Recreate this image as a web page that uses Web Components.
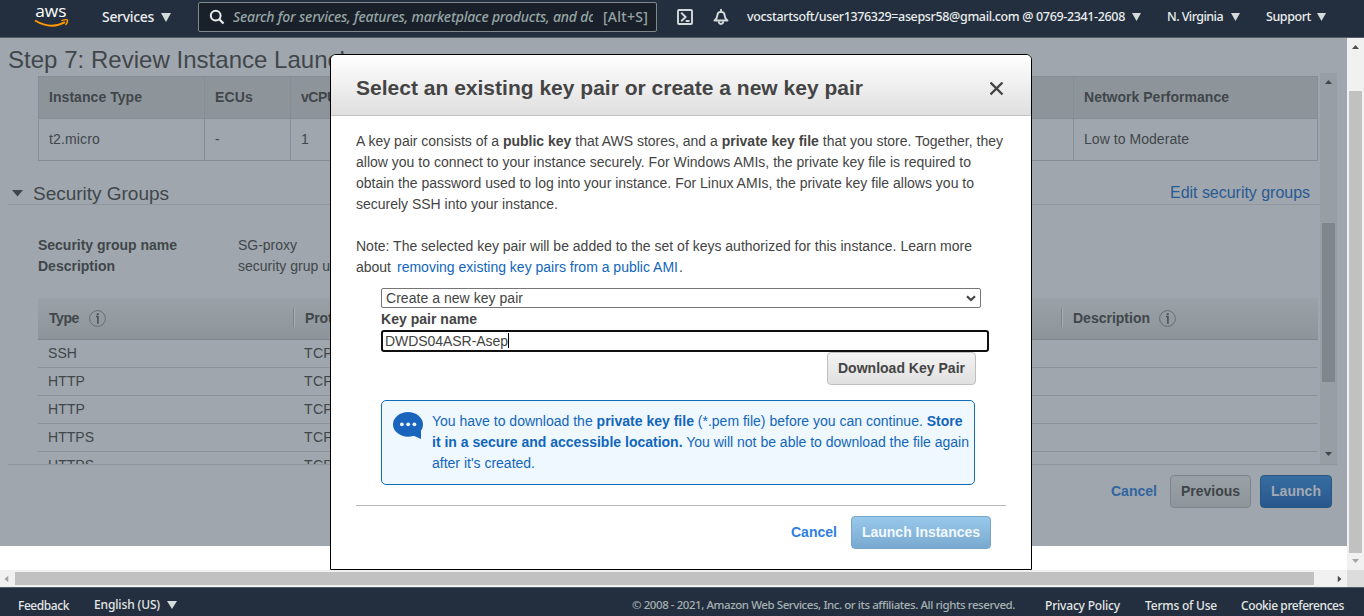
<!DOCTYPE html>
<html lang="en">
<head>
<meta charset="utf-8">
<title>EC2 Management Console</title>
<style>
html,body{margin:0;height:616px;overflow:hidden;background:#fff}
body{font-family:"Liberation Sans",Arial,sans-serif;font-size:14px;color:#444}
</style>
</head>
<body>
<console-app></console-app>
<script>
const tracked = new Set();
function define(name, html, setup) {
  const t = document.createElement('template');
  t.innerHTML = html;
  customElements.define(name, class extends HTMLElement {
    constructor() {
      super();
      this.attachShadow({mode: 'open'}).appendChild(t.content.cloneNode(true));
    }
    connectedCallback() { if (setup) setup(this, this.shadowRoot); }
  });
}

/* Single line of text, tracked to fill the width given in "w". */
define('line-text', `<style>
:host{display:block;white-space:nowrap;flex:none}
span{display:inline-block;white-space:pre}
</style><span><slot></slot></span>`, el => { tracked.add(el); el.style.width = el.getAttribute('w') + 'px'; });

define('caret-down', `<style>
:host{display:block;flex:none;width:10px;height:9px}svg{display:block;width:100%;height:100%}
</style><svg viewBox="0 0 10 9" preserveAspectRatio="none"><path d="M0 0H10L5 9Z" fill="#d5dbdb"/></svg>`);

define('info-mark', `<style>:host{display:block;flex:none;width:17px;height:17px}svg{display:block}</style>
<svg width="17" height="17" viewBox="0 0 17 17"><circle cx="8.5" cy="8.5" r="7.9" fill="none" stroke="#686e73" stroke-width="1"/><path d="M7 6.5h1.9v7.2" fill="none" stroke="#4c5156" stroke-width="1.6"/><rect x="7.7" y="3.3" width="2" height="1.7" fill="#4c5156"/></svg>`);

define('ui-button', `<style>
:host{display:flex;box-sizing:border-box;height:33px;border:1px solid #bfbfbf;border-radius:4px;align-items:center;justify-content:center;font-weight:bold;color:#444;background:linear-gradient(#f3f3f3,#e0e0e0);line-height:21px;flex:none}
:host([kind=dim]){border-color:#7d848a;background:linear-gradient(#9aa1a6,#8f969b);color:#3f4449}
:host([kind=launch]){border-color:#265682;background:linear-gradient(#376da2,#28578b);color:#a3aab3}
:host([kind=primary]){border-color:#76a6cc;background:linear-gradient(#98c9eb,#79a9cf);color:#f2f8fd}
</style><slot></slot>`);

define('scroll-track', `<style>
:host{display:flex;flex-direction:column;align-items:center;box-sizing:border-box;width:17px;background:var(--track,#f1f1f1);flex:none}
:host([horizontal]){flex-direction:row;width:auto;height:17px}
.end{width:17px;height:17px;flex:none;display:flex;align-items:center;justify-content:center}
.pre{flex:none}
.thumb{background:var(--thumb,#c1c1c1);width:13px;flex:none}
.gap{flex:1}
:host([horizontal]) .thumb{height:13px}
:host([horizontal]) .end{width:var(--end,17px)}
:host([horizontal]) .a{padding-right:3px;box-sizing:border-box}
.b{box-sizing:border-box;padding-bottom:var(--lift,2px)}
:host([horizontal]) .b{padding:0}
svg{display:block}
:host([horizontal]) svg{transform:rotate(-90deg)}
</style>
<div class="end a"><svg width="7" height="4"><path d="M0 4L3.5 0L7 4Z"/></svg></div><div class="pre"></div><div class="thumb"></div><div class="gap"></div>
<div class="end b"><svg width="7" height="4"><path d="M0 0L3.5 4L7 0Z"/></svg></div>`, (el, r) => {
  const h = el.hasAttribute('horizontal'), p = h ? 'width' : 'height';
  r.querySelector('.pre').style[p] = el.getAttribute('before') + 'px';
  r.querySelector('.thumb').style[p] = el.getAttribute('size') + 'px';
  r.querySelector('.a path').setAttribute('fill', el.getAttribute('start') || '#505050');
  r.querySelector('.b path').setAttribute('fill', el.getAttribute('finish') || '#505050');
});

define('console-header', `<style>
:host{display:flex;box-sizing:border-box;height:38px;background:#232f3e;border-bottom:1px solid #555e68;font:500 12.5px/20px "Noto Sans","Open Sans",sans-serif;color:#eaeded;align-items:flex-start}
.logo{width:34px;height:22px;margin:6px 0 0 34px;flex:none}
.logo svg{display:block;overflow:visible}
.t{margin-top:7px}
.search{display:flex;box-sizing:border-box;width:459px;height:30px;margin:2px 0 0 27px;border:1px solid #7f8a8d;border-radius:2px;background:#1a2029;color:#95a5a6;font-size:14px;line-height:28px;flex:none;align-items:center}
.search svg{margin-left:10px;flex:none}
.ph{width:360px;margin-left:8px;overflow:hidden;font-style:italic}
caret-down{margin-top:13px}
.ico{margin-top:9px;flex:none}
</style>
<div class="logo"><svg width="35" height="22" viewBox="0 0 35 22"><text x="1.2" y="11.2" textLength="31.3" lengthAdjust="spacingAndGlyphs" font-family="Open Sans" font-weight="500" font-size="17" fill="#fff">aws</text>
<path d="M1 14.5Q17 24 31 16.2" fill="none" stroke="#f90" stroke-width="1.9"/><path d="M27.4 14.6Q33 12.9 33.6 14.3Q33.8 16.2 31.6 19" fill="none" stroke="#f90" stroke-width="1.4"/></svg></div>
<line-text class="t" w="52" style="font-size:14px;margin-left:34px">Services</line-text><caret-down style="margin-left:7px"></caret-down>
<div class="search"><svg width="16" height="16" viewBox="0 0 16 16"><circle cx="6.7" cy="6.6" r="4.9" fill="none" stroke="#eaeded" stroke-width="2"/><path d="M10.3 10.3L14.5 14.5" stroke="#eaeded" stroke-width="2.2"/></svg>
<div class="ph"><line-text w="363">Search for services, features, marketplace products, and do</line-text></div>
<line-text w="45" style="margin-left:10px">[Alt+S]</line-text></div>
<svg class="ico" style="margin-left:20px" width="16" height="16" viewBox="0 0 16 16"><rect x="1" y="1" width="14" height="14" rx="1" fill="none" stroke="#d5dbdb" stroke-width="1.9"/><path d="M4.2 3.8L8.6 8L4.2 12.2M8.7 12H12.5" fill="none" stroke="#d5dbdb" stroke-width="1.9"/></svg>
<svg class="ico" style="margin-left:20px" width="16" height="16" viewBox="0 0 16 16"><path d="M1.5 11.5Q4.2 9.4 4.3 6.6Q4.6 2.9 8 2.7Q11.4 2.9 11.7 6.6Q11.8 9.4 14.5 11.5Z" fill="none" stroke="#d5dbdb" stroke-width="1.9" stroke-linejoin="round"/><path d="M8 0V2.4M5.7 12.3Q5.8 15 8 15Q10.2 15 10.3 12.3" fill="none" stroke="#d5dbdb" stroke-width="1.8"/></svg>
<line-text class="t" w="378" style="margin-left:18px">vocstartsoft/user1376329=asepsr58@gmail.com @ 0769-2341-2608</line-text><caret-down style="margin-left:7px;width:9px;height:8px"></caret-down>
<line-text class="t" w="56" style="margin-left:26px">N. Virginia</line-text><caret-down style="margin-left:8px;width:9px;height:8px"></caret-down>
<line-text class="t" w="45" style="margin-left:26px">Support</line-text><caret-down style="margin-left:6px;width:9px;height:8px"></caret-down>`);

define('console-footer', `<style>
:host{display:flex;box-sizing:border-box;height:29px;background:#232f3e;border-top:1px solid #535d64;font:500 12px/20px "Noto Sans","Open Sans",sans-serif;color:#e3e7e7;padding:8px 0 0 18px}
line-text{height:20px}
</style>
<line-text w="51">Feedback</line-text><line-text w="66" style="margin:-1px 0 0 25px">English (US)</line-text><caret-down style="margin:5px 0 0 7px;width:10px;height:8px"></caret-down>
<line-text w="383" style="margin:-1px 0 0 455px;color:#a6b0b3;font-size:11.5px">© 2008 - 2021, Amazon Web Services, Inc. or its affiliates. All rights reserved.</line-text>
<line-text w="75" style="margin-left:30px">Privacy Policy</line-text><line-text w="72" style="margin-left:25px">Terms of Use</line-text><line-text w="103" style="margin-left:24px">Cookie preferences</line-text>`);

define('instance-table', `<style>
:host{display:grid;grid-template-columns:166px 86px 783px 244px;grid-template-rows:42px 42px;box-sizing:border-box;width:1280px;height:85px;border:solid #868d94;border-width:1px 0 0 1px;line-height:41px}
div{box-sizing:border-box;border:solid #868d94;border-width:0 1px 1px 0;padding-left:10px}
.h{background:#8e959a;font-weight:bold}
</style>
<div class="h"><line-text w="93">Instance Type</line-text></div><div class="h"><line-text w="38">ECUs</line-text></div><div class="h"><line-text w="43">vCPUs</line-text></div><div class="h"><line-text w="145">Network Performance</line-text></div>
<div><line-text w="51">t2.micro</line-text></div><div><line-text w="5">-</line-text></div><div><line-text w="8">1</line-text></div><div><line-text w="105">Low to Moderate</line-text></div>`);

define('rule-row', `<style>
:host{display:flex;box-sizing:border-box;height:28px;border-bottom:1px solid #8a9197;padding-left:10px;line-height:27px;flex:none}
.type{width:256px}</style><div class="type"><slot></slot></div><line-text w="29">TCP</line-text>`);

define('rules-table', `<style>
:host{display:flex;flex-direction:column;width:1280px}
.h{display:flex;box-sizing:border-box;height:42px;flex:none;border-bottom:1px solid #7f868c;background:linear-gradient(#9aa1a7,#8d949a);align-items:center;padding-left:11px;font-weight:bold;line-height:20px}
.h>line-text{margin-top:-2px}
.sep{box-sizing:border-box;width:2px;height:19px;border-left:1px solid #7d848a;border-right:1px solid #a6adb3;margin-top:-2px}
info-mark{margin-left:10px}
</style>
<div class="h"><line-text w="30">Type</line-text><info-mark></info-mark><div class="sep" style="margin-left:187px"></div><line-text w="56" style="margin-left:10px">Protocol</line-text><div class="sep" style="margin-left:700px"></div><line-text w="77" style="margin-left:10px">Description</line-text><info-mark style="margin-left:9px"></info-mark></div>
<rule-row><line-text w="29">SSH</line-text></rule-row><rule-row><line-text w="37">HTTP</line-text></rule-row><rule-row><line-text w="37">HTTP</line-text></rule-row><rule-row><line-text w="46">HTTPS</line-text></rule-row><rule-row><line-text w="46">HTTPS</line-text></rule-row>`);

define('review-page', `<style>
:host{display:flex;flex-direction:column;width:1347px;height:508px;background:#9fa6ad;color:#41464b}
h1{margin:0;font-weight:normal;font-size:24px;line-height:28px;height:35px;box-sizing:border-box;padding:8px 0 0 8px}
.panel{display:flex;box-sizing:border-box;width:1329px;height:392px;margin-left:8px;border-bottom:1px solid #8e959c;overflow:hidden;flex:none}
.scroll{width:1312px;height:391px;overflow:hidden;display:flex;flex-direction:column}
.scroll>*{flex:none}
instance-table{margin:3px 0 0 30px}
.sec{display:flex;box-sizing:border-box;height:44px;border-bottom:1px solid #8f969d;padding:21px 10px 0 4px;line-height:24px;justify-content:space-between}
.left{display:flex;font-size:19px;height:22px}
.left svg{margin:8px 10px 0 0}
.edit{color:#285a94;font-size:16px;line-height:22px;height:22px}
dl{display:grid;grid-template-columns:200px auto;margin:30px 0 21px 30px;line-height:21px;height:42px;justify-content:start}
dt{font-weight:bold}dd{margin:0}
rules-table{margin-left:30px}
.actions{display:flex;height:33px;margin-top:10px;padding-right:15px;justify-content:flex-end;align-items:center;line-height:21px}
</style>
<h1><line-text w="345">Step 7: Review Instance Launch</line-text></h1>
<div class="panel"><div class="scroll"><instance-table></instance-table>
<div class="sec"><div class="left"><svg width="11" height="7"><path d="M0 0H11L5.5 6.5Z" fill="#41464b"/></svg><line-text w="136">Security Groups</line-text></div><line-text class="edit" w="140">Edit security groups</line-text></div>
<dl><dt><line-text w="139">Security group name</line-text></dt><dd><line-text w="59">SG-proxy</line-text></dd><dt><line-text w="77">Description</line-text></dt><dd><line-text w="92">security grup u</line-text></dd></dl>
<rules-table></rules-table></div>
<scroll-track before="133" size="159" start="#41464b" finish="#41464b" style="--track:#979ea4;--thumb:#7f868c;--lift:3px;height:391px"></scroll-track></div>
<div class="actions"><line-text w="46" style="font-weight:bold;color:#3065a0">Cancel</line-text><ui-button kind="dim" style="width:81px;margin-left:13px"><line-text w="59">Previous</line-text></ui-button><ui-button kind="launch" style="width:72px;margin-left:9px"><line-text w="50">Launch</line-text></ui-button></div>`);

define('key-pair-dialog', `<style>
:host{display:flex;flex-direction:column;box-sizing:border-box;width:702px;height:516px;border:1px solid #000;border-radius:6px 6px 0 0;background:#fff;color:#444;overflow:hidden;line-height:21px}
header{display:flex;box-sizing:border-box;height:61px;border-bottom:1px solid #c3c3c3;background:linear-gradient(#fff,#dfdfdf);padding:20px 27px 0 25px;justify-content:space-between;font-size:21px;line-height:26px;font-weight:bold;flex:none}
header svg{margin:7px 0 0}
.copy{margin:15px 0 0 25px;height:147px;flex:none}
.gap{height:21px}
a{color:#1166bb}
.form{margin-left:50px;display:flex;flex-direction:column;align-items:flex-start;flex:none}
.select{display:flex;box-sizing:border-box;width:600px;height:20px;margin-top:10px;border:1px solid #767676;border-radius:2px;padding:0 4px;justify-content:space-between;line-height:18px}
.select svg{margin:6px 0 0}
label{font-weight:bold;height:22px;line-height:22px}
.input{display:flex;box-sizing:border-box;width:608px;height:22px;border:2px solid #101010;border-radius:3px;padding-left:2px;line-height:18px}
.cursor{width:1px;height:15px;background:#000;margin-top:1px}
.alert{display:flex;box-sizing:border-box;width:594px;height:85px;margin-top:15px;border:1px solid #0f6db7;border-radius:5px;background:#f0f8ff;color:#1166bb;padding:10px 0 0 11px}
.alert svg{margin:1px 9px 0 0;flex:none}
.foot{display:flex;box-sizing:border-box;width:650px;height:44px;margin:20px 0 0 25px;border-top:1px solid #b5b9b9;padding:10px 15px 0 0;justify-content:flex-end;align-items:center}
</style>
<header><line-text w="507">Select an existing key pair or create a new key pair</line-text><svg width="14" height="14"><path d="M0.5 0.5L12.5 12.5M12.5 0.5L0.5 12.5" stroke="#444" stroke-width="2.3"/></svg></header>
<div class="copy"><line-text w="647">A key pair consists of a <b>public key</b> that AWS stores, and a <b>private key file</b> that you store. Together, they</line-text>
<line-text w="615">allow you to connect to your instance securely. For Windows AMIs, the private key file is required to</line-text>
<line-text w="618">obtain the password used to log into your instance. For Linux AMIs, the private key file allows you to</line-text>
<line-text w="202">securely SSH into your instance.</line-text><div class="gap"></div>
<line-text w="616">Note: The selected key pair will be added to the set of keys authorized for this instance. Learn more</line-text>
<div style="display:flex"><line-text w="35">about</line-text><a style="margin-left:6px"><line-text w="281">removing existing key pairs from a public AMI</line-text></a><line-text w="4" style="margin-left:1px">.</line-text></div></div>
<div class="form"><div class="select"><line-text w="137">Create a new key pair</line-text><svg width="10" height="7"><path d="M1 1.2L5 5L9 1.2" fill="none" stroke="#444" stroke-width="2.1"/></svg></div>
<label><line-text w="96">Key pair name</line-text></label>
<div class="input"><line-text w="123">DWDS04ASR-Asep</line-text><div class="cursor"></div></div>
<ui-button style="width:149px;margin-left:446px"><line-text w="127">Download Key Pair</line-text></ui-button>
<div class="alert"><svg width="30" height="27"><ellipse cx="15" cy="12.4" rx="15" ry="12.3" fill="#1964bd"/><path d="M19 23L28 27V18Z" fill="#1964bd"/><circle cx="8.9" cy="12.3" r="1.9" fill="#f0f8ff"/><circle cx="15.2" cy="12.3" r="1.9" fill="#f0f8ff"/><circle cx="21.4" cy="12.3" r="1.9" fill="#f0f8ff"/></svg>
<div><line-text w="530.5">You have to download the <b>private key file</b> (*.pem file) before you can continue. <b>Store</b></line-text><line-text w="537"><b>it in a secure and accessible location.</b> You will not be able to download the file again</line-text><line-text w="103">after it's created.</line-text></div></div></div>
<div class="foot"><line-text w="46" style="font-weight:bold;color:#2f7ee0">Cancel</line-text><ui-button kind="primary" style="width:140px;margin-left:14px"><line-text w="118">Launch Instances</line-text></ui-button></div>`);

define('console-app', `<style>
:host{display:flex;flex-direction:column;position:relative;width:1364px;height:616px;overflow:hidden}
.view{display:flex;height:532px;flex:none}
.page{width:1347px}
.bar{display:flex;height:17px;flex:none}
.corner{width:17px;background:#dcdcdc}
key-pair-dialog{position:absolute;left:330px;top:54px}
</style>
<console-header></console-header>
<div class="view"><div class="page"><review-page></review-page></div><scroll-track before="36" size="462" finish="#a3a3a3"></scroll-track></div>
<div class="bar"><scroll-track horizontal before="0" size="1299" start="#a3a3a3" style="width:1347px;--end:15px"></scroll-track><div class="corner"></div></div>
<console-footer></console-footer>
<key-pair-dialog></key-pair-dialog>`);

for (const el of tracked) {
  const span = el.shadowRoot.querySelector('span');
  const n = el.textContent.length, target = +el.getAttribute('w');
  if (n > 1) span.style.letterSpacing = ((target - span.getBoundingClientRect().width) / n).toFixed(3) + 'px';
}
</script>
</body>
</html>
